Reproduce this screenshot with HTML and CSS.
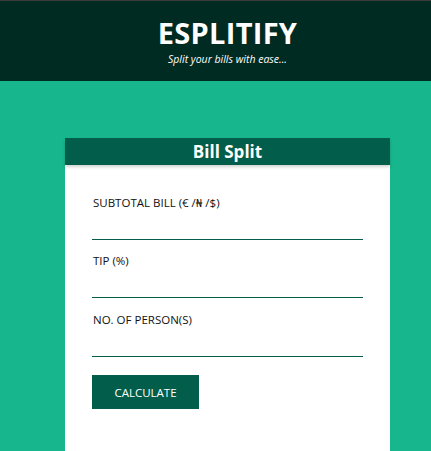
FILE: index.html
```html
<!DOCTYPE html>
<html>
<head>
<meta charset="utf-8">
<link rel="stylesheet" href="styles.css">
</head>
<body>
<header class="top">
  <h1 class="brand">ESPLITIFY</h1>
  <p class="tagline">Split your bills with ease...</p>
</header>
<main class="main">
  <section class="card">
    <h2 class="card-title">Bill Split</h2>
    <form class="form">
      <label class="field">
        <span class="label">SUBTOTAL BILL (€ /₦ /$)</span>
        <input class="input" type="text">
      </label>
      <label class="field">
        <span class="label">TIP (%)</span>
        <input class="input" type="text">
      </label>
      <label class="field">
        <span class="label">NO. OF PERSON(S)</span>
        <input class="input" type="text">
      </label>
      <button class="btn" type="button">CALCULATE</button>
    </form>
  </section>
</main>
</body>
</html>
```

FILE: styles.css
```css
* { box-sizing: border-box; }
html, body { margin: 0; padding: 0; }
body {
  font-family: "Open Sans", "Noto Sans", sans-serif;
  background: #17b68d;
  height: 451px;
  overflow: hidden;
}
.top {
  background: #002b22;
  border-top: 1px solid #3c3c3c;
  height: 81px;
  padding-left: 24px;
  text-align: center;
  color: #fff;
}
.brand {
  margin: 0;
  padding-top: 13px;
  font-size: 29px;
  font-weight: 700;
  line-height: 38px;
  letter-spacing: 0.3px;
}
.tagline {
  margin: 0;
  font-size: 10.5px;
  font-style: italic;
  font-weight: 400;
  line-height: 14px;
}
.main {
  padding-top: 57px;
  padding-left: 65px;
}
.card {
  width: 325px;
  height: 320px;
  background: #fff;
}
.card-title {
  margin: 0;
  height: 27px;
  background: #025e4a;
  color: #fff;
  text-align: center;
  font-size: 17px;
  font-weight: 700;
  line-height: 27px;
  box-shadow: 0 2px 3px rgba(0,0,0,0.18);
  position: relative;
}
.form {
  padding: 30px 27px 0 27px;
  display: flex;
  flex-direction: column;
}
.field {
  display: flex;
  flex-direction: column;
  margin-bottom: 13px;
}
.field:nth-child(2) { margin-bottom: 14px; }
.field:nth-child(3) { margin-bottom: 18px; }
.label {
  font-size: 11.5px;
  color: #111;
  line-height: 16px;
  padding-left: 1px;
}
.input {
  border: 0;
  border-bottom: 1px solid #025e4a;
  height: 29px;
  width: 271px;
  outline: none;
  background: transparent;
  padding: 0;
  margin: 0;
}
.btn {
  align-self: flex-start;
  width: 107px;
  height: 34px;
  border: 0;
  background: #025e4a;
  color: #fff;
  font-family: "Open Sans", sans-serif;
  font-size: 11.5px;
  padding: 0;
}
```
